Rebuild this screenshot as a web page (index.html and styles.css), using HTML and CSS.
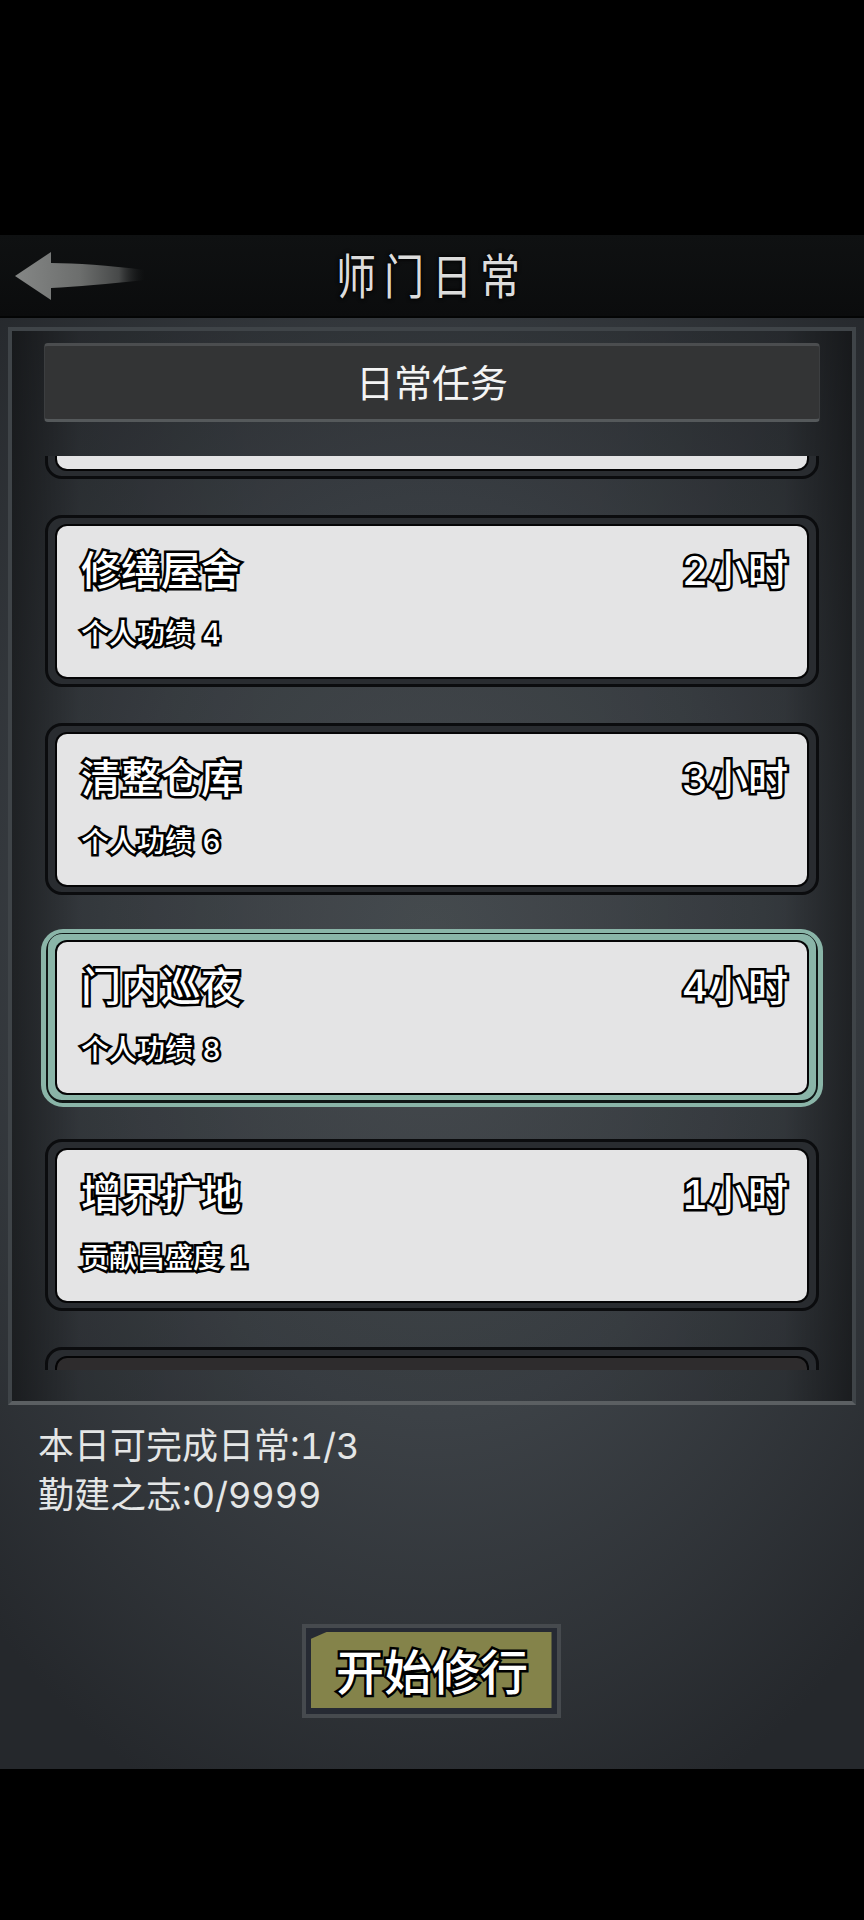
FILE: index.html
```html
<!doctype html>
<html>

    <head>
        <title>师门日常</title>
        <meta charset="UTF-8">
        <meta name="viewport" content="width=device-width, initial-scale=1">
        <link rel="stylesheet" href="styles.css">
    </head>

    <body>
        <div class="screen">
            <div class="header">
                <svg class="back" width="130" height="50" viewBox="0 0 130 50">
                    <defs>
                        <linearGradient id="fade" x1="0" x2="1" y1="0" y2="0">
                            <stop offset="0" stop-color="#858786"/>
                            <stop offset="0.5" stop-color="#6c6e6d"/>
                            <stop offset="0.8" stop-color="#474949"/>
                            <stop offset="1" stop-color="#1a1c1d" stop-opacity="0"/>
                        </linearGradient>
                    </defs>
                    <path d="M0 24 L36 0 L36 11 Q74 11 130 18 L130 28 Q74 34 36 36 L36 48 Z" fill="url(#fade)"/>
                </svg>
                <h1 class="title">师门日常</h1>
            </div>

            <div class="panel">
                <div class="tab">日常任务</div>
                <div class="list">
                    <div class="list-inner">
                        <div class="task">
                            <div class="task-body"></div>
                        </div>
                        <div class="task">
                            <div class="task-body">
                                <div class="task-top"><span>修缮屋舍</span><span>2小时</span></div>
                                <div class="task-reward">个人功绩 4</div>
                            </div>
                        </div>
                        <div class="task">
                            <div class="task-body">
                                <div class="task-top"><span>清整仓库</span><span>3小时</span></div>
                                <div class="task-reward">个人功绩 6</div>
                            </div>
                        </div>
                        <div class="task selected">
                            <div class="task-body">
                                <div class="task-top"><span>门内巡夜</span><span>4小时</span></div>
                                <div class="task-reward">个人功绩 8</div>
                            </div>
                        </div>
                        <div class="task">
                            <div class="task-body">
                                <div class="task-top"><span>增界扩地</span><span>1小时</span></div>
                                <div class="task-reward">贡献昌盛度 1</div>
                            </div>
                        </div>
                        <div class="task">
                            <div class="task-body dim"></div>
                        </div>
                    </div>
                </div>
            </div>

            <div class="info">
                <p>本日可完成日常:1/3</p>
                <p>勤建之志:0/9999</p>
            </div>

            <div class="actions">
                <a class="start"><span class="start-face">开始修行</span></a>
            </div>
        </div>
    </body>

</html>
```

FILE: styles.css
```css
* {
  box-sizing: border-box;
}

body {
  margin: 0;
  background: #000;
  font-family: Inter, "Noto Sans CJK SC", "Liberation Sans", sans-serif;
  font-variant-numeric: tabular-nums;
  color: #fff;
}

/* Game area, black bars above and below */
.screen {
  margin-top: 235px;
  height: 1534px;
  background: radial-gradient(ellipse 640px 920px at 50% 47%, #4b5155 0%, #3c4146 50%, #25282c 100%);
}

/* Top bar */
.header {
  position: relative;
  height: 83px;
  background: linear-gradient(#0f1112, #0b0c0d);
  border-bottom: 2px solid #040505;
  display: flex;
  align-items: center;
  justify-content: center;
}

.back {
  position: absolute;
  left: 15px;
  top: 17px;
}

.title {
  margin: -4px 0 0;
  font-size: 40px;
  font-weight: 400;
  letter-spacing: 8px;
  color: #dcdcdc;
  transform: scaleY(1.2);
  text-shadow: 0 0 4px #000, 0 0 2px #000;
}

/* Main panel */
.panel {
  margin: 9px 8px 0;
  height: 1078px;
  border: 4px solid #3f4448;
  border-bottom-color: #5b5f62;
  background: linear-gradient(90deg, rgba(0, 0, 0, .42), rgba(0, 0, 0, .12) 8%, rgba(0, 0, 0, .08) 30%, rgba(0, 0, 0, .08) 70%, rgba(0, 0, 0, .12) 92%, rgba(0, 0, 0, .42));
}

.tab {
  margin: 12px 32px 0;
  height: 79px;
  background: #333435;
  border: 1px solid #3c3e40;
  border-top: 3px solid #4b4d4f;
  border-bottom: 3px solid #55595b;
  border-radius: 4px;
  font-size: 38px;
  font-weight: 400;
  line-height: 75px;
  text-align: center;
  color: #f4f4f4;
}

/* Scrolled task list */
.list {
  margin-top: 34px;
  height: 914px;
  overflow: hidden;
}

.list-inner {
  margin-top: -149px;
  padding: 0 33px;
  display: flex;
  flex-direction: column;
  gap: 36px;
}

.task {
  position: relative;
  height: 172px;
  padding: 8px 9px 7px;
  border: 3px solid #0b0c0e;
  border-radius: 17px;
  background: #292c30;
}

.task-body {
  height: 151px;
  padding: 20px 19px 0 24px;
  background: #e4e4e5;
  border-radius: 10px;
  box-shadow: 0 0 0 2px #050506;
}

.task-body.dim {
  background: #2e2c2d;
}

.task.selected {
  border-color: #101716;
  background: #8ab5a8;
}

/* Outer green ring on the selected task */
.task.selected::before {
  content: "";
  position: absolute;
  top: -5px;
  bottom: -7px;
  left: -7px;
  right: -7px;
  border: 4px solid #8ab5a8;
  border-left-width: 5px;
  border-right-width: 5px;
  border-radius: 22px;
}

.task-top {
  display: flex;
  justify-content: space-between;
  font-size: 40px;
  font-weight: 500;
  line-height: 50px;
}

.task-top span,
.task-reward,
.start-face {
  -webkit-text-stroke: 5px #000;
  paint-order: stroke fill;
}

.task-reward {
  margin-top: 20px;
  font-size: 28px;
  font-weight: 500;
  line-height: 36px;
  word-spacing: 2px;
}

/* Counters under the panel */
.info {
  margin: 17px 0 0 38px;
  font-size: 36px;
  font-weight: 400;
  line-height: 49px;
  color: #e4e6e6;
}

.info p {
  margin: 0;
}

/* Start button */
.actions {
  display: flex;
  justify-content: center;
  margin-top: 104px;
  padding-right: 2px;
}

.start {
  display: block;
  width: 259px;
  height: 94px;
  padding: 4px 5px;
  background: #262a33;
  border: 4px solid #464a4e;
}

.start-face {
  display: block;
  height: 76px;
  padding-left: 2px;
  background: #84834a;
  clip-path: polygon(16px 0, 100% 0, 100% 100%, 0 100%, 0 7px);
  font-size: 48px;
  font-weight: 500;
  line-height: 81px;
  text-align: center;
}
```
